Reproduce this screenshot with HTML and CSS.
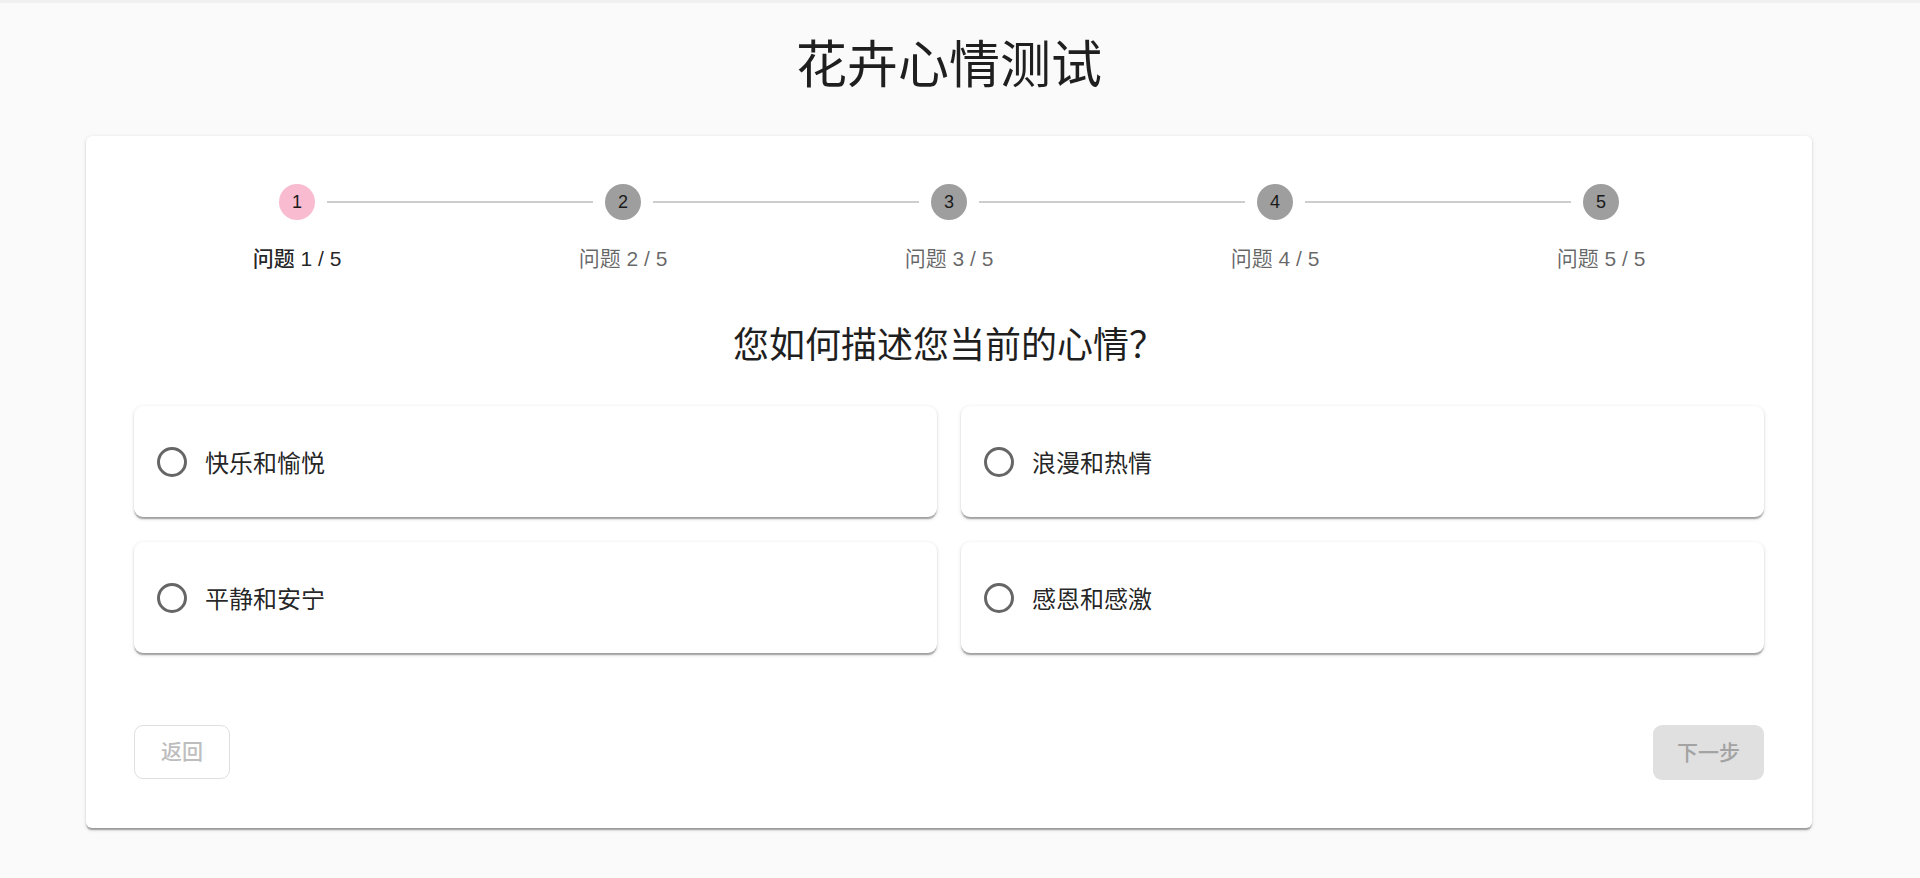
FILE: index.html
```html
<!DOCTYPE html>
<html lang="zh-CN">
<head>
<meta charset="utf-8">
<title>花卉心情测试</title>
<link rel="stylesheet" href="styles.css">
</head>
<body>
<div class="topbar"></div>
<div class="page">
  <h1 class="title">花卉心情测试</h1>
  <div class="card">
    <div class="stepper">
      <div class="step-icons">
        <span class="dot active">1</span>
        <span class="line"></span>
        <span class="dot">2</span>
        <span class="line"></span>
        <span class="dot">3</span>
        <span class="line"></span>
        <span class="dot">4</span>
        <span class="line"></span>
        <span class="dot">5</span>
      </div>
      <div class="step-labels">
        <span class="label active">问题 1 / 5</span>
        <span class="label">问题 2 / 5</span>
        <span class="label">问题 3 / 5</span>
        <span class="label">问题 4 / 5</span>
        <span class="label">问题 5 / 5</span>
      </div>
    </div>
    <h2 class="question">您如何描述您当前的心情？</h2>
    <div class="options">
      <label class="option"><svg class="radio" viewBox="0 0 30 30"><circle cx="15" cy="15" r="13.5"/></svg><span>快乐和愉悦</span></label>
      <label class="option"><svg class="radio" viewBox="0 0 30 30"><circle cx="15" cy="15" r="13.5"/></svg><span>浪漫和热情</span></label>
      <label class="option"><svg class="radio" viewBox="0 0 30 30"><circle cx="15" cy="15" r="13.5"/></svg><span>平静和安宁</span></label>
      <label class="option"><svg class="radio" viewBox="0 0 30 30"><circle cx="15" cy="15" r="13.5"/></svg><span>感恩和感激</span></label>
    </div>
    <div class="actions">
      <button class="btn btn-back" disabled>返回</button>
      <button class="btn btn-next" disabled>下一步</button>
    </div>
  </div>
</div>
</body>
</html>
```

FILE: styles.css
```css
* { box-sizing: border-box; }
html, body { margin: 0; padding: 0; }
body {
  background: #fafafa;
  font-family: "Liberation Sans", "Noto Sans CJK SC", sans-serif;
  color: rgba(0,0,0,0.87);
  height: 878px;
  overflow: hidden;
}
.topbar { height: 3px; background: #f0f0f0; }
.page { padding: 31px 108px 0 86px; }
.title {
  margin: 0 0 39px;
  font-size: 51px;
  line-height: 63px;
  font-weight: 400;
  text-align: center;
  color: #1f1f1f;
}
.card {
  background: #fff;
  border-radius: 6px;
  padding: 48px;
  box-shadow: 0 3px 1.5px -1.5px rgba(0,0,0,0.2), 0 1.5px 1.5px 0 rgba(0,0,0,0.14), 0 1.5px 4.5px 0 rgba(0,0,0,0.12);
}
.step-icons {
  display: flex;
  align-items: center;
  padding: 0 145px;
  height: 36px;
}
.dot {
  width: 36px;
  height: 36px;
  border-radius: 50%;
  background: #9e9e9e;
  color: #1a1a1a;
  font-size: 18px;
  display: flex;
  align-items: center;
  justify-content: center;
  flex: none;
}
.dot.active { background: #f8bbd0; }
.line {
  flex: 1;
  margin: 0 12px;
  height: 2px;
  background: #cdcdcd;
}
.step-labels {
  display: grid;
  grid-template-columns: repeat(5, 1fr);
  margin-top: 24px;
}
.label {
  text-align: center;
  font-size: 21px;
  line-height: 30px;
  color: rgba(0,0,0,0.6);
}
.label.active { color: rgba(0,0,0,0.87); font-weight: 500; }
.question {
  margin: 48px 0 36px;
  font-size: 36px;
  line-height: 48px;
  font-weight: 400;
  text-align: center;
  color: #1f1f1f;
}
.options {
  display: grid;
  grid-template-columns: 1fr 1fr;
  column-gap: 24px;
  row-gap: 25px;
}
.option {
  height: 111px;
  background: #fff;
  border-radius: 9px;
  display: flex;
  align-items: center;
  padding-left: 23px;
  box-shadow: 0 3px 1.5px -1.5px rgba(0,0,0,0.2), 0 1.5px 1.5px 0 rgba(0,0,0,0.14), 0 1.5px 4.5px 0 rgba(0,0,0,0.12);
  font-size: 24px;
  color: rgba(0,0,0,0.87);
}
.radio {
  width: 30px;
  height: 30px;
  flex: none;
  margin-right: 18px;
}
.radio circle { fill: none; stroke: #666; stroke-width: 3; }
.actions {
  display: flex;
  justify-content: space-between;
  align-items: flex-start;
  margin-top: 72px;
}
.btn {
  font-family: "Liberation Sans", "Noto Sans CJK SC", sans-serif;
  font-size: 21px;
  font-weight: 500;
  line-height: 36px;
  border-radius: 9px;
  min-width: 96px;
}
.btn-back {
  height: 54px;
  padding: 0 22px;
  background: #fff;
  border: 1.5px solid #e0e0e0;
  color: #bdbdbd;
}
.btn-next {
  height: 55px;
  padding: 0 24px;
  background: #e0e0e0;
  border: none;
  color: #a3a3a3;
}
```
